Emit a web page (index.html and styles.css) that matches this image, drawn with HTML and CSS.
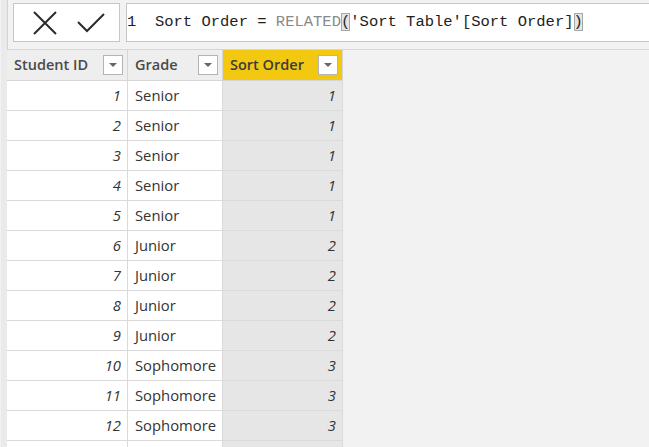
FILE: index.html
```html
<!DOCTYPE html>
<html>
<head>
<meta charset="utf-8">
<link rel="stylesheet" href="styles.css">
</head>
<body>
<div class="page">
  <div class="formula-bar">
    <div class="buttons">
      <svg class="icon" width="24" height="24" viewBox="0 0 24 24"><path d="M1 1 L23 23 M23 1 L1 23" stroke="#2b2b2b" stroke-width="2" fill="none"/></svg>
      <svg class="icon" width="28" height="20" viewBox="0 0 28 20"><path d="M1 9 L10 18 L27 1" stroke="#2b2b2b" stroke-width="2" fill="none"/></svg>
    </div>
    <div class="formula"><span class="ln">1</span>  Sort Order = <span class="fn">RELATED</span><span class="match">(</span>'Sort Table'[Sort Order]<span class="match">)</span></div>
  </div>
  <div class="table">
    <div class="th"><span>Student ID</span><span class="dd"></span></div>
    <div class="th"><span>Grade</span><span class="dd"></span></div>
    <div class="th active"><span>Sort Order</span><span class="dd"></span></div>

    <div class="td num">1</div><div class="td">Senior</div><div class="td num calc">1</div>
    <div class="td num">2</div><div class="td">Senior</div><div class="td num calc">1</div>
    <div class="td num">3</div><div class="td">Senior</div><div class="td num calc">1</div>
    <div class="td num">4</div><div class="td">Senior</div><div class="td num calc">1</div>
    <div class="td num">5</div><div class="td">Senior</div><div class="td num calc">1</div>
    <div class="td num">6</div><div class="td">Junior</div><div class="td num calc">2</div>
    <div class="td num">7</div><div class="td">Junior</div><div class="td num calc">2</div>
    <div class="td num">8</div><div class="td">Junior</div><div class="td num calc">2</div>
    <div class="td num">9</div><div class="td">Junior</div><div class="td num calc">2</div>
    <div class="td num">10</div><div class="td">Sophomore</div><div class="td num calc">3</div>
    <div class="td num">11</div><div class="td">Sophomore</div><div class="td num calc">3</div>
    <div class="td num">12</div><div class="td">Sophomore</div><div class="td num calc">3</div>
    <div class="td num"></div><div class="td"></div><div class="td num calc"></div>
  </div>
</div>
</body>
</html>
```
FILE: styles.css
```css
html, body {
  margin: 0;
  padding: 0;
  background: #f2f2f2;
  overflow: hidden;
  height: 447px;
}
.page {
  width: 649px;
  height: 447px;
  overflow: hidden;
  border-left: 1px solid transparent;
  box-sizing: border-box;
  background: linear-gradient(to right, #eaeaea 0, #eaeaea 6px, #d2d2d2 6px, #d2d2d2 7px, #f2f2f2 7px);
}
.formula-bar {
  display: flex;
  gap: 6px;
  padding: 3px 0 0 12px;
  height: 39px;
}
.buttons {
  flex: 0 0 auto;
  box-sizing: border-box;
  width: 107px;
  height: 39px;
  background: #fff;
  border: 1px solid #c6c6c6;
  display: flex;
  align-items: center;
  gap: 20px;
  padding-left: 19px;
}
.buttons .icon { display: block; }
.formula {
  flex: 0 0 auto;
  box-sizing: border-box;
  width: 560px;
  height: 39px;
  background: #fff;
  border: 1px solid #c6c6c6;
  font-family: "Liberation Mono", "DejaVu Sans Mono", monospace;
  font-size: 15.5px;
  color: #1e1e1e;
  white-space: pre;
  line-height: 37px;
  padding-left: 0;
}
.formula .fn { color: #8a8a8a; }
.formula .match {
  background: #e4e4e4;
  outline: 1px solid #a8a8a8;
  outline-offset: -1px;
}
.table {
  margin-top: 7px;
  margin-left: 6px;
  display: grid;
  grid-template-columns: 121px 95px 120px;
  grid-auto-rows: 30px;
  grid-template-rows: 31px;
  border-top: 1px solid #d6d6d6;
  font-family: "Open Sans", "Noto Sans", sans-serif;
  font-size: 14.8px;
}
.th {
  background: #eeeeee;
  border-right: 1px solid #d6d6d6;
  border-bottom: 1px solid #d6d6d6;
  display: flex;
  align-items: center;
  justify-content: space-between;
  padding: 0 4px 1px 7px;
  font-weight: 600;
  color: #4a4a4a;
  font-size: 14.5px;
}
.th .dd { margin-top: 1px; }
.th.active {
  background: #f2c811;
  color: #3c3c3c;
}
.dd {
  width: 18px;
  height: 18px;
  background: #fff;
  border: 1px solid #b4b4b4;
  position: relative;
}
.dd::after {
  content: "";
  position: absolute;
  left: 5px;
  top: 7px;
  border-left: 4px solid transparent;
  border-right: 4px solid transparent;
  border-top: 4px solid #666;
}
.td {
  background: #fff;
  border-right: 1px solid #dadada;
  border-bottom: 1px solid #dadada;
  display: flex;
  align-items: center;
  padding: 0 6px 2px 7px;
  color: #333;
}
.td.num {
  justify-content: flex-end;
  font-style: italic;
}
.td.calc {
  background: #e6e6e6;
}
```
